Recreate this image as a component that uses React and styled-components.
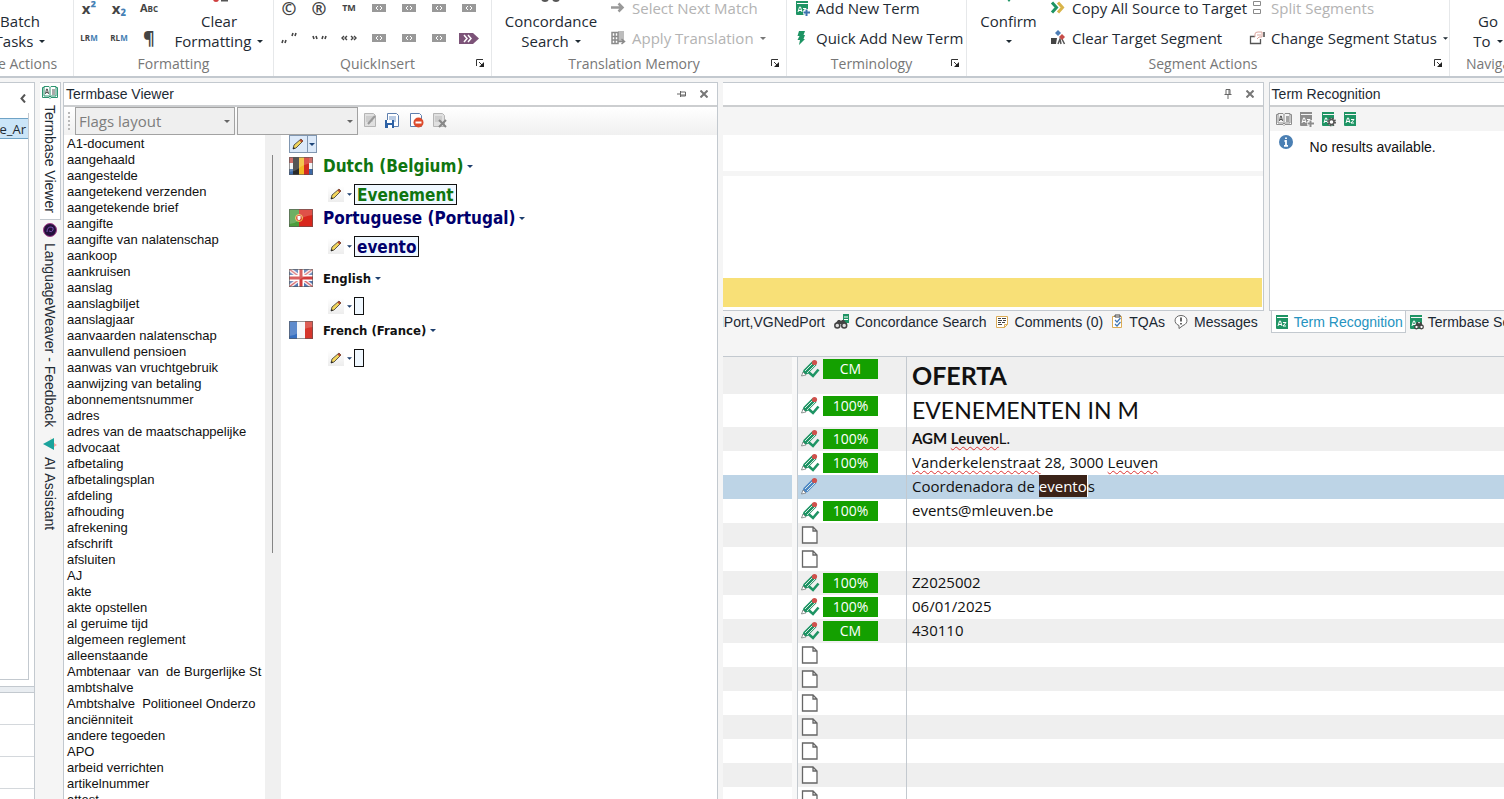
import styled, { createGlobalStyle } from "styled-components";

const GlobalStyle = createGlobalStyle`
    * { box-sizing: border-box; }
    body {
        margin: 0;
        background: #f5f5f5;
        color: #1e2a33;
        font-family: "Liberation Sans", Arial, sans-serif;
        font-size: 14px;
    }
    button, select {
        font: inherit;
        color: inherit;
        border: 0;
        padding: 0;
        margin: 0;
        background: none;
    }
    ul { margin: 0; padding: 0; list-style: none; }
    h2, h3 { margin: 0; }
    svg { display: block; flex: none; }
`;

const line = "#c3c9cf";
const ribbonFont = `"Open Sans", "Noto Sans", sans-serif`;

const Page = styled.div`
    height: 100vh;
    display: flex;
    flex-direction: column;
    overflow: hidden;
`;

/* ribbon */
const Ribbon = styled.header`
    flex: none;
    display: flex;
    height: 78px;
    background: #fff;
    border-bottom: 2px solid ${line};
    font-family: ${ribbonFont};
    font-size: 15px;
    overflow: hidden;
    white-space: nowrap;
`;
const Group = styled.section`
    flex: 0 0 ${(p) => p.$width}px;
    display: flex;
    flex-direction: column;
    border-right: 1px solid #e6e8ea;
    overflow: hidden;
`;
const GroupBody = styled.div`
    height: 53px;
    display: flex;
    align-items: flex-end;
`;
const GroupFooter = styled.div`
    height: 20px;
    display: flex;
    align-items: center;
    padding: 0 5px;
    color: #777;
    font-size: 14px;
`;
const GroupLabel = styled.span`
    flex: 1;
    text-align: center;
`;
const CutLabel = styled.span`
    margin-left: ${(p) => p.$start}px;
`;
const LauncherButton = styled.button`
    width: 10px;
    height: 10px;
`;
const BigButton = styled.button`
    width: ${(p) => p.$width}px;
    height: 60px;
    display: flex;
    flex: none;
    flex-direction: column;
    align-items: center;
    justify-content: flex-end;
    line-height: 20px;
    padding-bottom: 2px;
`;
const BigLine = styled.span`
    min-height: 20px;
    display: flex;
    align-items: center;
    gap: 6px;
`;
const SymbolGrid = styled.div`
    display: grid;
    grid-template-columns: repeat(${(p) => p.$cols}, 30px);
    grid-auto-rows: 30px;
`;
const SymbolButton = styled.button`
    display: flex;
    align-items: center;
    justify-content: center;
    color: #444;
    font-size: ${(p) => p.$size || 15}px;
    font-variant: ${(p) => (p.$caps ? "small-caps" : "normal")};
    font-weight: 700;
    line-height: 16px;
`;
const Blue = styled.span`
    color: #4580b5;
`;
const CommandList = styled.div`
    display: flex;
    flex-direction: column;
    padding-left: ${(p) => p.$pad || 0}px;
`;
const CommandButton = styled.button`
    height: 30px;
    display: flex;
    align-items: center;
    gap: 6px;
    text-align: left;
    color: ${(p) => (p.disabled ? "#b3b3b3" : "inherit")};
`;

/* shared panels */
const Workspace = styled.div`
    flex: 1;
    min-height: 0;
    display: flex;
    padding-top: 4px;
`;
const Panel = styled.section`
    display: flex;
    flex-direction: column;
    min-width: 0;
    min-height: 0;
    background: #fff;
    border: solid ${line};
    border-width: ${(p) => p.$borders};
    flex: ${(p) => p.$flex || "none"};
`;
const PanelHeader = styled.div`
    flex: none;
    height: 24px;
    display: flex;
    align-items: center;
    padding: 0 2px;
    border-bottom: 2px solid #ccced0;
`;
const PanelTitle = styled.h2`
    flex: 1;
    font-size: 14px;
    font-weight: 400;
    white-space: nowrap;
`;
const HeaderButton = styled.button`
    width: 22px;
    height: 16px;
    display: flex;
    align-items: center;
    justify-content: center;
`;

/* far left */
const NavColumn = styled.aside`
    flex: 0 0 35px;
    display: flex;
    flex-direction: column;
    overflow: hidden;
    background: #fff;
    border: solid ${line};
    border-width: 1px 1px 0 0;
`;
const NavTop = styled.div`
    height: 30px;
    flex: none;
    display: flex;
    align-items: center;
    justify-content: flex-end;
    padding-right: 8px;
`;
const NavTree = styled.div`
    flex: none;
    height: 567px;
    padding-top: 5px;
    margin-right: 5px;
    border: solid ${line};
    border-width: 0 1px 1px 0;
`;
const TreeItem = styled.div`
    height: 21px;
    display: flex;
    align-items: center;
    justify-content: flex-end;
    padding-right: 2px;
    background: #cbe5f8;
    border: solid #6fa3c6;
    border-width: 1px 0;
    font-family: ${ribbonFont};
    font-size: 13px;
`;
const NavSplitter = styled.div`
    flex: none;
    height: 7px;
    margin-top: 6px;
    background: #e9edf1;
    border: solid ${line};
    border-width: 1px 0;
`;
const NavItem = styled.div`
    flex: none;
    height: 32px;
    border-bottom: 1px solid #d4d8dc;
`;

const SideTabs = styled.nav`
    flex: 0 0 28px;
    display: flex;
    flex-direction: column;
    padding-left: 5px;
`;
const SideTab = styled.button`
    writing-mode: vertical-rl;
    width: 21px;
    display: flex;
    align-items: center;
    gap: 6px;
    padding: 2px 0 6px;
    white-space: nowrap;
    background: ${(p) => (p.$active ? "#fff" : "transparent")};
    border: solid ${(p) => (p.$active ? line : "transparent")};
    border-width: 1px 1px 1px 0;
`;

/* termbase viewer */
const ViewerToolbar = styled.div`
    flex: none;
    height: 28px;
    display: flex;
    align-items: center;
    background: linear-gradient(#fff, #f0f0f0);
`;
const Grip = styled.span`
    width: 2px;
    height: 18px;
    margin: 0 5px 0 4px;
    background: repeating-linear-gradient(#b9b9b9 0 2px, transparent 2px 4px);
`;
const SelectBox = styled.label`
    position: relative;
    width: ${(p) => p.$width}px;
    margin-right: 2px;
`;
const Select = styled.select`
    appearance: none;
    width: 100%;
    height: 28px;
    padding: 0 3px;
    background: #efefef;
    border: 1px solid #a2a2a2;
    border-radius: 0;
    color: #7d7d7d;
    font-family: ${ribbonFont};
    font-size: 15px;
`;
const SelectArrow = styled.span`
    position: absolute;
    right: 5px;
    top: 13px;
    pointer-events: none;
`;
const ToolRow = styled.div`
    display: flex;
    align-items: center;
    gap: 7px;
    padding: 0 0 2px 2px;
`;
const ToolButton = styled.button`
    width: 16px;
    height: 16px;
`;
const ViewerBody = styled.div`
    flex: 1;
    min-height: 0;
    display: flex;
`;
const TermList = styled.ul`
    flex: 0 0 201px;
    overflow: hidden;
    && { padding: 1px 0 0 3px; }
    font-size: 13px;
    line-height: 16px;
    color: #111;
    white-space: pre;
`;
const ScrollTrack = styled.div`
    flex: 0 0 16px;
    padding: 20px 0 0 7px;
    background: #f0f0f0;
`;
const ScrollThumb = styled.div`
    width: 1px;
    height: 398px;
    background: #858585;
`;
const EntryView = styled.div`
    flex: 1;
    min-width: 0;
    padding-left: 8px;
    font-family: "DejaVu Sans Condensed", "Noto Sans", sans-serif;
`;
const EntryMenu = styled.div`
    width: 28px;
    height: 18px;
    display: flex;
    background: #dce9f9;
    border: 1px solid #8096b0;
`;
const MenuPart = styled.button`
    flex: ${(p) => (p.$wide ? 2 : 1)};
    display: flex;
    align-items: center;
    justify-content: center;
    border-left: ${(p) => (p.$wide ? 0 : 1)}px solid #8096b0;
`;
const Entry = styled.div`
    margin-top: ${(p) => p.$gap || 0}px;
`;
const EntryHeading = styled.h3`
    height: 24px;
    display: flex;
    align-items: center;
    gap: 4px;
    padding-top: 2px;
    color: ${(p) => p.$color};
    font-size: ${(p) => p.$size}px;
    white-space: nowrap;
    svg:first-child { margin-right: 6px; }
`;
const EntryTerm = styled.div`
    height: 28px;
    display: flex;
    align-items: center;
    padding: 6px 0 0 39px;
    color: ${(p) => p.$color};
`;
const PencilButton = styled.button`
    width: 16px;
    height: 16px;
    margin-right: 3px;
    display: flex;
    align-items: center;
    justify-content: center;
    background: linear-gradient(#fff, #ededed);
`;
const TermBox = styled.span`
    height: ${(p) => (p.children ? 21 : 18)}px;
    min-width: 10px;
    margin-left: 2px;
    padding: 0 2px;
    line-height: 20px;
    border: 1px solid #111;
    background: #f0f8ff;
    font-size: 17px;
    font-weight: 700;
`;

/* right side */
const Editor = styled.main`
    flex: 1;
    min-width: 0;
    display: flex;
    flex-direction: column;
    margin-left: 5px;
`;
const PanelRow = styled.div`
    flex: none;
    height: 229px;
    display: flex;
    gap: 5px;
`;
const ResultsBar = styled.div`
    height: 28px;
    background: #f5f5f5;
`;
const SourceBox = styled.div`
    height: 41px;
    border-bottom: 5px solid #f5f5f5;
`;
const MatchRow = styled.div`
    height: 29px;
    margin: 102px 1px 0 0;
    background: #f8e077;
`;
const RecognitionBar = styled.div`
    height: 24px;
    display: flex;
    align-items: center;
    gap: 6px;
    padding-left: 6px;
    background: #f4f4f4;
`;
const Message = styled.p`
    display: flex;
    gap: 17px;
    margin: 0;
    padding: 4px 9px;
    color: #111;
    line-height: 24px;
`;
const TabRow = styled.div`
    flex: none;
    height: 22px;
    display: flex;
    gap: 5px;
    color: #1b2833;
    white-space: nowrap;
    overflow: hidden;
`;
const TabSet = styled.div`
    flex: ${(p) => p.$flex};
    min-width: 0;
    display: flex;
    gap: ${(p) => p.$gap}px;
    padding: 0 ${(p) => p.$end || 0}px 0 ${(p) => p.$start || 0}px;
    overflow: hidden;
`;
const Tab = styled.button`
    flex: none;
    display: flex;
    align-items: center;
    gap: ${(p) => (p.$tight ? 4 : 6)}px;
    padding: 0 2px;
    color: ${(p) => (p.$active ? "#2593c0" : "inherit")};
    background: ${(p) => (p.$active ? "#fff" : "transparent")};
    border: solid ${(p) => (p.$active ? line : "transparent")};
    border-width: 0 ${(p) => (p.$active ? 1 : 0)}px 1px;
`;
const CutTab = styled(Tab)`
    flex: 0 1 auto;
    min-width: 0;
    justify-content: flex-end;
    overflow: hidden;
`;
const GridFrame = styled.div`
    flex: 1;
    min-height: 0;
    margin-top: 23px;
    border-top: 1px solid ${line};
    overflow: hidden;
`;
const Grid = styled.table`
    width: 100%;
    table-layout: fixed;
    border-collapse: separate;
    border-spacing: 0;
    color: #111;
`;
const Segment = styled.tr`
    height: ${(p) => p.$height}px;
    background: ${(p) => (p.$selected ? "#bdd4e6" : p.$shade ? "#efefef" : "#fff")};
`;
const SourceCell = styled.td`
    width: 69px;
    padding: 0;
`;
const GapCell = styled.td`
    width: 5px;
    padding: 0;
    background: #f8f8f8;
`;
const StatusCell = styled.td`
    width: 109px;
    padding: 0 0 0 2px;
    vertical-align: top;
    border-left: 1px solid ${line};
`;
const TargetCell = styled.td`
    padding: 0 0 2px 5px;
    border-left: 1px solid ${line};
    font-family: ${(p) => (p.$heading ? `Lato, ${ribbonFont}` : ribbonFont)};
    font-size: ${(p) => p.$size || 15}px;
    font-weight: ${(p) => (p.$bold ? 700 : 400)};
    line-height: 22px;
    white-space: nowrap;
`;
const StatusRow = styled.div`
    display: flex;
    align-items: center;
    gap: 3px;
    height: 24px;
`;
const Badge = styled.span`
    width: 55px;
    height: 20px;
    line-height: 20px;
    text-align: center;
    color: #fff;
    background: #14a000;
    font-family: ${ribbonFont};
    font-size: 14px;
`;
const Misspelt = styled.span`
    text-decoration: underline wavy #d33 1px;
    text-underline-offset: 2px;
`;
const Selection = styled.mark`
    display: inline-block;
    height: 22px;
    color: #fff;
    background: #3b2318;
    border-right: 1px solid #fff;
`;

/* icons */
const Caret = ({ color = "#1e2a33", size = 6 }) => (
    <svg width={size} height="3" viewBox="0 0 6 3"><path d="M0 0h6L3 3z" fill={color} /></svg>
);

const Launcher = () => (
    <LauncherButton aria-label="More options">
        <svg width="9" height="9" viewBox="0 0 9 9">
            <path d="M.5 7V.5H7M3 3l4 4" fill="none" stroke="#333" />
            <path d="M8 3v5H3z" fill="#222" />
        </svg>
    </LauncherButton>
);

const TagIcon = () => (
    <svg width="14" height="8" viewBox="0 0 14 8">
        <path fill="#999" d="M0 0h14v8H0z" />
        <path d="M6 2 4 4l2 2M8 2l2 2-2 2" fill="none" stroke="#fff" />
    </svg>
);

const TagEndIcon = () => (
    <svg width="20" height="11" viewBox="0 0 20 11">
        <path fill="#7c5378" d="M0 0h14l6 5.500-6 5.500H0z" />
        <path d="m5 2 3 3.500L5 9M9 2l3 3.500L9 9" fill="none" stroke="#fff" strokeWidth="1.500" />
    </svg>
);

const QuoteIcon = ({ low }) => (
    <svg width="16" height="12" viewBox="0 0 16 12">
        <path
            d={low ? "m2 8-1 3M5 8l-1 3M12 1l-1 3M15 1l-1 3" : "m2 4 1 3M5 4l1 3M12 4l-1 3M15 4l-1 3"}
            stroke="#444"
            strokeWidth="1.600"
        />
    </svg>
);

const GuillemetIcon = () => (
    <svg width="16" height="8" viewBox="0 0 16 8">
        <path d="M3 2 1 4l2 2M6 2 4 4l2 2M10 2l2 2-2 2M13 2l2 2-2 2" fill="none" stroke="#444" strokeWidth="1.400" />
    </svg>
);

const BookAz = ({ color = "#1e9464", extra }) => (
    <svg width="16" height="16" viewBox="0 0 16 16">
        <path d="M2 1h12v2H3v1h11v11H3q-1 0-1-1z" fill={color} />
        <path d="m4 12 1.500-5h1L8 12M4.500 10.500h3M9 8.500h3l-3 3.500h3" fill="none" stroke="#fff" />
        {extra === "plus" && <path d="M9 12.500h7M12.500 9v7" stroke="#fff" strokeWidth="4" />}
        {extra === "plus" && <path d="M9.500 12.500H16M12.500 9.500V16" stroke={color === "#8d8d8d" ? color : "#3d73ae"} strokeWidth="2" />}
        {extra === "gear" && (
            <g fill="#fff" stroke="#555">
                <circle cx="11.500" cy="11" r="3.500" strokeWidth="2" strokeDasharray="1.500 1.250" />
                <circle cx="11.500" cy="11" r="2.500" strokeWidth="1.500" />
            </g>
        )}
        {extra === "search" && <Binoculars x={6} y={8} />}
    </svg>
);

const Binoculars = ({ x = 0, y = 0 }) => (
    <g transform={`translate(${x} ${y})`}>
        <path d="M1 4 3 0h1l1 2 1-2h1l2 4z" fill="#444" />
        <circle cx="2.500" cy="5" r="1.800" fill="#fff" stroke="#444" strokeWidth="1.300" />
        <circle cx="7.500" cy="5" r="1.800" fill="#fff" stroke="#444" strokeWidth="1.300" />
    </g>
);

const ConcordanceIcon = () => (
    <svg width="15" height="16" viewBox="0 0 15 16">
        <path d="M9 0h6v9H9z" fill="#1e9464" />
        <path d="M10 3h4M10 5.500h4" stroke="#fff" />
        <g transform="translate(0 5)">
            <path d="M1 5 4 1h2l1 1 1-1h2l3 4z" fill="#444" />
            <circle cx="3.300" cy="6.500" r="2.500" fill="#ddd" stroke="#444" strokeWidth="1.500" />
            <circle cx="10.200" cy="6.500" r="2.500" fill="#ddd" stroke="#444" strokeWidth="1.500" />
        </g>
    </svg>
);

const OpenBook = ({ color = "#2c9470", width = 16 }) => (
    <svg width={width} height="14" viewBox="0 0 16 14">
        <path d="M.5 2.500H2v-1h5l1 1 1-1h5v1h1.500v10H9l-1 1-1-1H.5zM8 2.500v9M2 2v9h5l1 1 1-1h5V2" fill="#fff" stroke={color} />
        <path d="m3.500 9 1-5h.8l1.200 5M3.800 7.500h2.400M10 5h3M10 7h3M10 9h3" fill="none" stroke="#555" />
    </svg>
);

const ArrowIcon = () => (
    <svg width="16" height="16" viewBox="0 0 16 16"><path d="M1 7.500h11M8.500 3.500l4 4-4 4" fill="none" stroke="#999" strokeWidth="2.500" /></svg>
);

const ApplyIcon = () => (
    <svg width="16" height="16" viewBox="0 0 16 16">
        <path d="M8 1h6v10H8z" fill="#bdbdbd" />
        <path d="M2 2.500h6v11H2zM2 6.500h6M2 10h6M5 2.500v11" fill="#fff" stroke="#8a8a8a" strokeWidth="1.500" />
        <path d="M8 11.500h6M11.500 9l3 2.500-3 2.500" fill="none" stroke="#8a8a8a" strokeWidth="1.500" />
    </svg>
);

const BoltIcon = () => (
    <svg width="16" height="16" viewBox="0 0 16 16"><path d="M5 1h6l-1.500 4H11L9.500 9H11l-6 6 1-5H3.500l2-4H3.500z" fill="#1e9464" /></svg>
);

const CopyAllIcon = () => (
    <svg width="16" height="16" viewBox="0 0 16 16" fill="none" strokeWidth="3">
        <path d="m8 2.500 4.500 5L8 12.500" stroke="#d9b44a" />
        <path d="m2 2.500 4.500 5L2 12.500" stroke="#1e9464" />
    </svg>
);

const ClearTargetIcon = () => (
    <svg width="16" height="16" viewBox="0 0 16 16">
        <path d="M1 8h6l-1 6H1z" fill="#444" />
        <path d="m8 14 2-5 1 5M12 9l2.500 5" fill="none" stroke="#555" strokeWidth="1.500" />
        <path d="m8 0 3 3-3 3-3-3z" fill="#4d7db5" />
        <path d="m12 4 3 3-3 3-3-3z" fill="#c74c48" />
    </svg>
);

const SplitIcon = () => (
    <svg width="16" height="16" viewBox="0 0 16 16"><path d="M4.500 1.500h7v4h-7zM4.500 9.500h7v4h-7z" fill="none" stroke="#8a8a8a" /></svg>
);

const StatusIcon = () => (
    <svg width="16" height="16" viewBox="0 0 16 16" fill="none">
        <path d="M6 6.500H1.500v7h10V9" stroke="#555" strokeWidth="1.300" />
        <path d="M6 7V4q0-2 3-2h4v5h-3l-2 2M8 5h4" stroke="#dba49c" />
        <path d="M15 2v5" stroke="#444" strokeWidth="1.500" />
    </svg>
);

const Pencil = () => (
    <svg width="12" height="12" viewBox="0 0 12 12">
        <path d="m1 11 1-4 7-6 2 2-7 7z" fill="#f3d55b" stroke="#333" strokeWidth=".8" />
        <path d="m9 1 2 2-1.500 1.500-2-2z" fill="#b5482f" />
        <path d="m1 11 .7-2 1.300 1.300z" fill="#111" />
    </svg>
);

const StatusPencil = ({ draft }) => (
    <svg width="20" height="20" viewBox="0 0 20 20">
        <path d="m1.500 17 2-6L12.500 2l4 4L7.500 15z" fill={draft ? "#4c86c4" : "#1e9464"} />
        <path d="m5 12 8-8M7 14l8-8" stroke="#d9ebe4" />
        <path d="m1.500 17 1.500-4 3 3z" fill="#fff" stroke="#777" strokeWidth=".7" />
        <circle cx="14.500" cy="3.500" r="2.600" fill="#cf514c" />
        {!draft && <path d="m8.500 13 4.500 4 5.500-6.500" fill="none" stroke="#1e9464" strokeWidth="2.600" />}
    </svg>
);

const PageIcon = () => (
    <svg width="20" height="20" viewBox="0 0 20 20"><path d="M2.500 2h10.500l4 4v12H2.500zM13 2v4h4" fill="#fff" stroke="#666" strokeWidth="1.300" /></svg>
);

const CommentIcon = () => (
    <svg width="13" height="14" viewBox="0 0 13 14">
        <path d="M.5 1.500h11v8l-3 3h-8zM11.500 9.500h-3v3" fill="#fff" stroke="#dcac55" />
        <path d="M2 3.500h3M6 3.500h4M2 5.500h4M7 5.500h3M2 7.500h3M6 7.500h3M2 9.500h4" stroke="#444" />
    </svg>
);

const TqaIcon = () => (
    <svg width="11" height="15" viewBox="0 0 11 15">
        <path d="M.5 2.500h9v11h-9z" fill="#fff" stroke="#dcac55" />
        <path d="M3 3V1h5v2z" fill="#fff" stroke="#444" />
        <path d="m3 6 2 2 3.500-4M3 10l2 2 3.500-4" fill="none" stroke="#3e76b5" strokeWidth="1.200" />
    </svg>
);

const MessageIcon = () => (
    <svg width="14" height="14" viewBox="0 0 14 14">
        <path d="M5 10.500C-1 8.500 0 .5 7 .5s8 8 2 10l-4 3z" fill="#fff" stroke="#666" />
        <path d="M7 2.500v4M7 8v1.500" stroke="#333" strokeWidth="1.500" />
    </svg>
);

const InfoIcon = () => (
    <svg width="14" height="14" viewBox="0 0 14 14">
        <circle cx="7" cy="7" r="7" fill="#4a7fb3" />
        <path d="M7 2.500V4M5.500 6H7v4.500M5 10.800h4" fill="none" stroke="#fff" strokeWidth="1.800" />
    </svg>
);

const PinIcon = ({ side }) => (
    <svg width="10" height="10" viewBox="0 0 10 10">
        <path
            d={side ? "M0 5h3M3.500 2v6M3.500 3h5v4h-5M3.500 6h5" : "M3 .5h4v5H3zM6 1v5M1.500 5.500h7M5 6v4"}
            fill="none"
            stroke="#666"
        />
    </svg>
);

const CloseIcon = () => (
    <svg width="8" height="8" viewBox="0 0 8 8"><path d="m.5.500 7 7m0-7-7 7" stroke="#777" strokeWidth="2" /></svg>
);

const WeaverIcon = () => (
    <svg width="14" height="14" viewBox="0 0 14 14">
        <circle cx="7" cy="7" r="6.500" fill="#23103c" stroke="#a33b8a" />
        <path d="M4 9q0-5 4-5 3 0 2 3T6 8" fill="none" stroke="#7951b3" />
    </svg>
);

const AssistantIcon = () => (
    <svg width="14" height="14" viewBox="0 0 14 14">
        <path d="m7 0 6 8-3 3z" fill="#fbdcb8" />
        <path d="m9 5 5 3-5 3z" fill="#f1a3a3" />
        <path d="M0 7 11 1v12z" fill="#1ba39c" />
    </svg>
);

const EditDocIcon = ({ kind }) => {
    const grey = kind === "edit" || kind === "discard";
    return (
        <svg width="16" height="16" viewBox="0 0 16 16">
            <path d="M2.500 1.500h9l2 2v11h-11z" fill={grey ? "#e0e0e0" : "#fff"} stroke={grey ? "#b5b5b5" : "#5e7fae"} />
            {kind !== "delete" && <path d="M4 5h7M4 7h7M4 9h7" stroke={grey ? "#bbb" : "#7597c6"} />}
            {kind === "edit" && <path d="m6 12 7-8" stroke="#999" strokeWidth="2" />}
            {kind === "save" && <path d="M0 8h9v8H0z" fill="#2f62a5" />}
            {kind === "save" && <path d="M2 8h5v3H2zM3 13h4v3H3z" fill="#fff" />}
            {kind === "delete" && <circle cx="10.500" cy="10.500" r="5" fill="#dd4b2c" />}
            {kind === "delete" && <path d="M7.500 10.500h6" stroke="#fff" strokeWidth="2" />}
            {kind === "discard" && <path d="m8 8 7 7m0-7-7 7" stroke="#888" strokeWidth="2" />}
        </svg>
    );
};

const Flag = ({ code }) => (
    <svg width="24" height="18" viewBox="0 0 24 18">
        {code === "be" && (
            <>
                <path d="M0 0h24v6H0z" fill="#c34a45" />
                <path d="M0 6h24v6H0z" fill="#f2f4f7" />
                <path d="M0 12h24v6H0z" fill="#3c69a8" />
                <path d="M4 0h6v18H4z" fill="#2b2b2b" />
                <path d="M10 0h5v18h-5z" fill="#f2b824" />
                <path d="M15 0h5v18h-5z" fill="#d32a20" />
            </>
        )}
        {code === "pt" && (
            <>
                <path d="M0 0h24v18H0z" fill="#d8261c" />
                <path d="M0 0h10v18H0z" fill="#4c9c3c" />
                <circle cx="10" cy="9" r="3.500" fill="#d8261c" stroke="#e9c84d" />
                <path d="M8.500 7h3v3L10 11.500 8.500 10z" fill="#fff" />
            </>
        )}
        {code === "en" && (
            <>
                <path d="M0 0h24v18H0z" fill="#5377b3" />
                <path d="m0 0 24 18M24 0 0 18" stroke="#f4e9ec" strokeWidth="4" />
                <path d="m0 0 24 18M24 0 0 18" stroke="#d9696c" strokeWidth="1.300" />
                <path d="M12 0v18M0 9h24" stroke="#fff" strokeWidth="6" />
                <path d="M12 0v18M0 9h24" stroke="#d03a3a" strokeWidth="3" />
            </>
        )}
        {code === "fr" && (
            <>
                <path d="M0 0h8v18H0z" fill="#376fc0" />
                <path d="M8 0h8v18H8z" fill="#f6f7f9" />
                <path d="M16 0h8v18h-8z" fill="#d5362c" />
            </>
        )}
        <path d="M0 0h24v6Q14 7 9 12 5 15 0 15z" fill="#fff" opacity=".2" />
        <path d="M.5.500h23v17H.5z" fill="none" stroke="#555" opacity=".6" />
    </svg>
);

const terms = [
    "A1-document", "aangehaald", "aangestelde", "aangetekend verzenden", "aangetekende brief", "aangifte",
    "aangifte van nalatenschap", "aankoop", "aankruisen", "aanslag", "aanslagbiljet", "aanslagjaar",
    "aanvaarden nalatenschap", "aanvullend pensioen", "aanwas van vruchtgebruik", "aanwijzing van betaling",
    "abonnementsnummer", "adres", "adres van de maatschappelijke", "advocaat", "afbetaling", "afbetalingsplan",
    "afdeling", "afhouding", "afrekening", "afschrift", "afsluiten", "AJ", "akte", "akte opstellen",
    "al geruime tijd", "algemeen reglement", "alleenstaande", "Ambtenaar  van  de Burgerlijke St", "ambtshalve",
    "Ambtshalve  Politioneel Onderzo", "anciënniteit", "andere tegoeden", "APO", "arbeid verrichten",
    "artikelnummer", "attest",
];

const entries = [
    { code: "be", name: "Dutch (Belgium)", term: "Evenement", color: "#107510", size: 17 },
    { code: "pt", name: "Portuguese (Portugal)", term: "evento", color: "#00006c", size: 17 },
    { code: "en", name: "English", term: "", color: "#111", size: 13, gap: 8 },
    { code: "fr", name: "French (France)", term: "", color: "#111", size: 13 },
];

const segments = [
    { match: "CM", text: "OFERTA", height: 37, size: 25, bold: true, heading: true },
    { match: "100%", text: "EVENEMENTEN IN M", height: 33, size: 23, heading: true },
    { match: "100%", text: <><b>AGM <Misspelt>Leuven</Misspelt></b>L.</>, heading: true },
    { match: "100%", text: <><Misspelt>Vanderkelenstraat</Misspelt> 28, 3000 <Misspelt>Leuven</Misspelt></> },
    { draft: true, text: <>Coordenadora de <Selection>evento</Selection>s</> },
    { match: "100%", text: "events@mleuven.be" },
    {},
    {},
    { match: "100%", text: "Z2025002" },
    { match: "100%", text: "06/01/2025" },
    { match: "CM", text: "430110" },
    {}, {}, {}, {}, {}, {}, {},
];

const RibbonBar = () => (
    <Ribbon>
        <Group $width={74}>
            <GroupBody>
                <BigButton $width={40}>
                    <BigLine>Batch</BigLine>
                    <BigLine>Tasks <Caret /></BigLine>
                </BigButton>
            </GroupBody>
            <GroupFooter><CutLabel $start={-7}>e Actions</CutLabel></GroupFooter>
        </Group>
        <Group $width={200}>
            <GroupBody>
                <SymbolGrid $cols={3}>
                    <SymbolButton><span>x<Blue>²</Blue></span></SymbolButton>
                    <SymbolButton><span>x<Blue>₂</Blue></span></SymbolButton>
                    <SymbolButton $size={11} $caps>Abc</SymbolButton>
                    <SymbolButton $size={8}>LR<Blue>M</Blue></SymbolButton>
                    <SymbolButton $size={8}>RL<Blue>M</Blue></SymbolButton>
                    <SymbolButton $size={18}>¶</SymbolButton>
                </SymbolGrid>
                <BigButton $width={110}>
                    <svg width="20" height="20" viewBox="0 0 20 20">
                        <circle cx="7" cy="8" r="3" fill="#cf3f3f" />
                        <path d="M12 9.500h7" stroke="#555" strokeWidth="2" />
                    </svg>
                    <BigLine>Clear</BigLine>
                    <BigLine>Formatting <Caret /></BigLine>
                </BigButton>
            </GroupBody>
            <GroupFooter><GroupLabel>Formatting</GroupLabel></GroupFooter>
        </Group>
        <Group $width={218}>
            <GroupBody>
                <SymbolGrid $cols={7}>
                    <SymbolButton $size={18}>©</SymbolButton>
                    <SymbolButton $size={18}>®</SymbolButton>
                    <SymbolButton $size={9}>TM</SymbolButton>
                    {[1, 2, 3, 4].map((n) => <SymbolButton key={n} aria-label={`Tag ${n}`}><TagIcon /></SymbolButton>)}
                    <SymbolButton aria-label="Low quotes"><QuoteIcon low /></SymbolButton>
                    <SymbolButton aria-label="High quotes"><QuoteIcon /></SymbolButton>
                    <SymbolButton aria-label="Guillemets"><GuillemetIcon /></SymbolButton>
                    {[5, 6, 7].map((n) => <SymbolButton key={n} aria-label={`Tag ${n}`}><TagIcon /></SymbolButton>)}
                    <SymbolButton aria-label="End tag"><TagEndIcon /></SymbolButton>
                </SymbolGrid>
            </GroupBody>
            <GroupFooter><GroupLabel>QuickInsert</GroupLabel><Launcher /></GroupFooter>
        </Group>
        <Group $width={295}>
            <GroupBody>
                <BigButton $width={118}>
                    <svg width="20" height="20" viewBox="0 0 20 20">
                        <circle cx="4" cy="7" r="3" fill="none" stroke="#555" strokeWidth="2" />
                        <circle cx="15" cy="7" r="3" fill="none" stroke="#555" strokeWidth="2" />
                    </svg>
                    <BigLine>Concordance</BigLine>
                    <BigLine>Search <Caret /></BigLine>
                </BigButton>
                <CommandList>
                    <CommandButton disabled><ArrowIcon />Select Next Match</CommandButton>
                    <CommandButton disabled><ApplyIcon />Apply Translation <Caret color="#777" /></CommandButton>
                </CommandList>
            </GroupBody>
            <GroupFooter><GroupLabel>Translation Memory</GroupLabel><Launcher /></GroupFooter>
        </Group>
        <Group $width={180}>
            <GroupBody>
                <CommandList $pad={7}>
                    <CommandButton><BookAz extra="plus" />Add New Term</CommandButton>
                    <CommandButton><BoltIcon />Quick Add New Term</CommandButton>
                </CommandList>
            </GroupBody>
            <GroupFooter><GroupLabel>Terminology</GroupLabel><Launcher /></GroupFooter>
        </Group>
        <Group $width={483}>
            <GroupBody>
                <BigButton $width={83}>
                    <svg width="10" height="20" viewBox="0 0 10 20"><path d="m2 7 3 4 3-4z" fill="#1e9464" /></svg>
                    <BigLine>Confirm</BigLine>
                    <BigLine><Caret /></BigLine>
                </BigButton>
                <CommandList>
                    <CommandButton><CopyAllIcon />Copy All Source to Target</CommandButton>
                    <CommandButton><ClearTargetIcon />Clear Target Segment</CommandButton>
                </CommandList>
                <CommandList $pad={2}>
                    <CommandButton disabled><SplitIcon />Split Segments</CommandButton>
                    <CommandButton><StatusIcon />Change Segment Status <Caret size={5} /></CommandButton>
                </CommandList>
            </GroupBody>
            <GroupFooter><GroupLabel>Segment Actions</GroupLabel><Launcher /></GroupFooter>
        </Group>
        <Group $width={120}>
            <GroupBody>
                <BigButton $width={76}>
                    <BigLine>Go</BigLine>
                    <BigLine>To <Caret /></BigLine>
                </BigButton>
            </GroupBody>
            <GroupFooter><CutLabel $start={11}>Navigation</CutLabel></GroupFooter>
        </Group>
    </Ribbon>
);

const TermbaseViewer = () => (
    <Panel $borders="1px 1px 0" $flex="0 1 655px">
        <PanelHeader>
            <PanelTitle>Termbase Viewer</PanelTitle>
            <HeaderButton aria-label="Pin"><PinIcon side /></HeaderButton>
            <HeaderButton aria-label="Close"><CloseIcon /></HeaderButton>
        </PanelHeader>
        <ViewerToolbar>
            <Grip />
            <SelectBox $width={160}>
                <Select aria-label="Layout"><option>Flags layout</option></Select>
                <SelectArrow><Caret color="#666" /></SelectArrow>
            </SelectBox>
            <SelectBox $width={121}>
                <Select aria-label="Entry class"><option></option></Select>
                <SelectArrow><Caret color="#666" /></SelectArrow>
            </SelectBox>
            <ToolRow>
                {["edit", "save", "delete", "discard"].map((kind) => (
                    <ToolButton key={kind} aria-label={kind}><EditDocIcon kind={kind} /></ToolButton>
                ))}
            </ToolRow>
        </ViewerToolbar>
        <ViewerBody>
            <TermList>
                {terms.map((term) => <li key={term}>{term}</li>)}
            </TermList>
            <ScrollTrack><ScrollThumb /></ScrollTrack>
            <EntryView>
                <EntryMenu>
                    <MenuPart $wide aria-label="Edit entry"><Pencil /></MenuPart>
                    <MenuPart aria-label="Entry menu"><Caret color="#1d4478" /></MenuPart>
                </EntryMenu>
                {entries.map((e) => (
                    <Entry key={e.code} $gap={e.gap}>
                        <EntryHeading $color={e.color} $size={e.size}>
                            <Flag code={e.code} />{e.name}<Caret color="#1d3f6e" />
                        </EntryHeading>
                        <EntryTerm $color={e.color}>
                            <PencilButton aria-label={`Edit ${e.name}`}><Pencil /></PencilButton>
                            <Caret color="#1d3f6e" size={5} />
                            <TermBox>{e.term}</TermBox>
                        </EntryTerm>
                    </Entry>
                ))}
            </EntryView>
        </ViewerBody>
    </Panel>
);

const SegmentGrid = () => (
    <GridFrame>
        <Grid>
            <tbody>
                {segments.map((s, i) => (
                    <Segment key={i} $height={s.height || 24} $shade={i % 2 === 0} $selected={s.draft}>
                        <SourceCell />
                        <GapCell />
                        <StatusCell>
                            <StatusRow>
                                {s.text ? <StatusPencil draft={s.draft} /> : <PageIcon />}
                                {s.match && <Badge>{s.match}</Badge>}
                            </StatusRow>
                        </StatusCell>
                        <TargetCell $size={s.size} $bold={s.bold} $heading={s.heading}>{s.text}</TargetCell>
                    </Segment>
                ))}
            </tbody>
        </Grid>
    </GridFrame>
);

const App = () => {
    return (
        <Page>
            <GlobalStyle />
            <RibbonBar />
            <Workspace>
                <NavColumn>
                    <NavTop>
                        <svg width="6" height="9" viewBox="0 0 6 9"><path d="M5 .5 1.500 4.500l3.500 4" fill="none" stroke="#555" strokeWidth="2" /></svg>
                    </NavTop>
                    <NavTree><TreeItem>e_Ar</TreeItem></NavTree>
                    <NavSplitter />
                    <NavItem />
                    <NavItem />
                    <NavItem />
                </NavColumn>
                <SideTabs>
                    <SideTab $active><OpenBook />Termbase Viewer</SideTab>
                    <SideTab><WeaverIcon />LanguageWeaver - Feedback</SideTab>
                    <SideTab><AssistantIcon />AI Assistant</SideTab>
                </SideTabs>
                <TermbaseViewer />
                <Editor>
                    <PanelRow>
                        <Panel $borders="1px 1px 1px 0" $flex="541 1 0">
                            <PanelHeader>
                                <PanelTitle />
                                <HeaderButton aria-label="Pin"><PinIcon /></HeaderButton>
                                <HeaderButton aria-label="Close"><CloseIcon /></HeaderButton>
                            </PanelHeader>
                            <ResultsBar />
                            <SourceBox />
                            <MatchRow />
                        </Panel>
                        <Panel $borders="1px 0 1px 1px" $flex="235 1 0">
                            <PanelHeader><PanelTitle>Term Recognition</PanelTitle></PanelHeader>
                            <RecognitionBar>
                                <ToolButton aria-label="View"><OpenBook color="#8d8d8d" /></ToolButton>
                                <ToolButton aria-label="Add term"><BookAz color="#8d8d8d" extra="plus" /></ToolButton>
                                <ToolButton aria-label="Settings"><BookAz extra="gear" /></ToolButton>
                                <ToolButton aria-label="Termbase"><BookAz /></ToolButton>
                            </RecognitionBar>
                            <Message><InfoIcon />No results available.</Message>
                        </Panel>
                    </PanelRow>
                    <TabRow>
                        <TabSet $flex="541 1 0" $gap={5} $end={4}>
                            <CutTab>dPort,VGNedPort</CutTab>
                            <Tab><ConcordanceIcon />Concordance Search</Tab>
                            <Tab><CommentIcon />Comments (0)</Tab>
                            <Tab><TqaIcon />TQAs</Tab>
                            <Tab><MessageIcon />Messages</Tab>
                        </TabSet>
                        <TabSet $flex="235 1 0" $gap={0} $start={2}>
                            <Tab $active $tight><BookAz />Term Recognition</Tab>
                            <Tab $tight><BookAz extra="search" />Termbase Search</Tab>
                        </TabSet>
                    </TabRow>
                    <SegmentGrid />
                </Editor>
            </Workspace>
        </Page>
    );
};

export default App;
